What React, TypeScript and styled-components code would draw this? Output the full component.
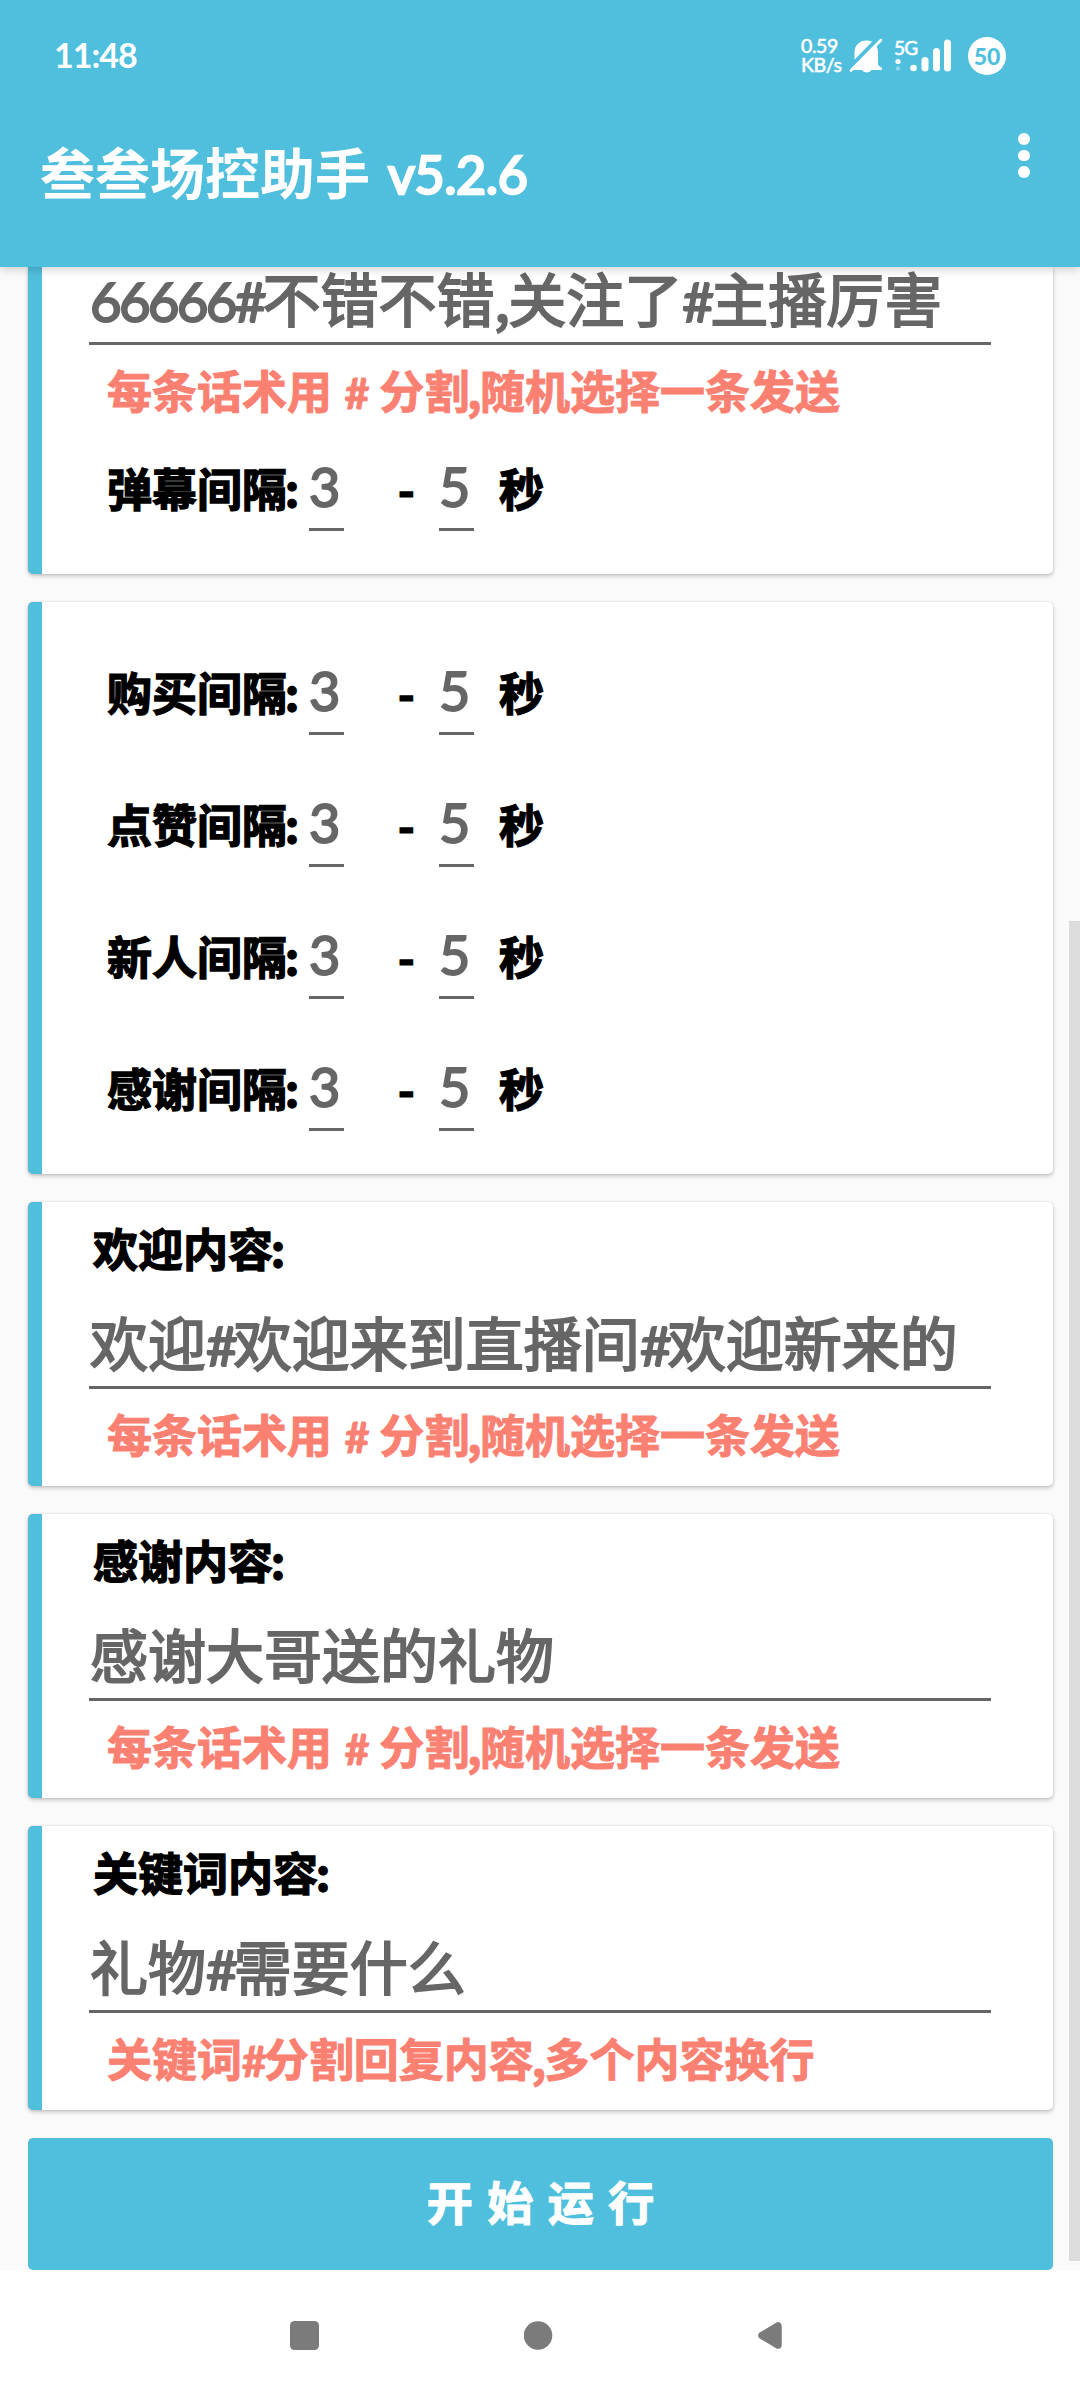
import React from "react";
import styled, { createGlobalStyle } from "styled-components";

const BLUE = "#50bfde";
const GREY = "#666666";
const CJK = '"Noto Sans CJK SC", "Noto Sans", sans-serif';
const LATIN = 'Lato, "Noto Sans CJK SC", sans-serif';

const GlobalStyle = createGlobalStyle`
  html, body { margin: 0; padding: 0; background: #fafafa; }
  *, *::before, *::after { box-sizing: border-box; }
`;

const Screen = styled.div`
  width: 1080px;
  height: 2400px;
  display: flex;
  flex-direction: column;
  overflow: hidden;
  background: #fafafa;
  font-family: ${CJK};
`;

const Header = styled.header`
  position: relative;
  z-index: 1;
  flex: none;
  height: 267px;
  background: ${BLUE};
  color: #fff;
  box-shadow: 0 2px 9px rgba(0, 0, 0, 0.2);
`;

const StatusBar = styled.div`
  height: 112px;
  padding: 0 74px 0 54px;
  display: flex;
  align-items: center;
  justify-content: space-between;
`;

const Clock = styled.div`
  font: 700 34px/40px ${LATIN};
  letter-spacing: -1px;
  padding-bottom: 3px;
`;

const StatusIcons = styled.div`
  display: flex;
  align-items: center;
`;

const NetSpeed = styled.div`
  width: 48px;
  display: flex;
  flex-direction: column;
  padding-bottom: 2px;
  font: 400 19.5px/19px ${LATIN};
  letter-spacing: -0.4px;
  -webkit-text-stroke: 0.6px;
`;

const Network = styled.div`
  display: flex;
  flex-direction: column;
  width: 16px;
  height: 36px;
  margin-left: 10px;
  font: 400 19px/20px ${LATIN};
  letter-spacing: -0.8px;
  white-space: nowrap;
  -webkit-text-stroke: 0.6px;
`;

const Battery = styled.div`
  width: 38px;
  height: 38px;
  margin-left: 17px;
  border-radius: 50%;
  background: #fff;
  color: ${BLUE};
  display: flex;
  align-items: center;
  justify-content: center;
  font: 900 23px/38px ${LATIN};
`;

const Toolbar = styled.div`
  height: 155px;
  padding: 0 50px 0 40px;
  display: flex;
  align-items: flex-start;
  justify-content: space-between;
`;

const Title = styled.h1`
  margin: 0;
  padding-top: 18px;
  font-size: 55px;
  line-height: 80px;
  font-weight: 700;
`;

const Version = styled.span`
  padding-left: 18px;
  font: 400 52px/0 ${LATIN};
  letter-spacing: -0.4px;
  -webkit-text-stroke: 2.6px;
`;

const MenuButton = styled.button`
  margin: 21px 0 0;
  padding: 0;
  border: 0;
  background: none;
  display: flex;
  flex-direction: column;
  gap: 5px;
`;

const Dot = styled.span`
  width: 11.6px;
  height: 11.6px;
  border-radius: 50%;
  background: #fff;
`;

const Body = styled.main`
  flex: 1;
  display: flex;
`;

const List = styled.div`
  flex: 1;
  padding: 0 16px 0 28px;
  display: flex;
  flex-direction: column;
  gap: 28px;
`;

const ScrollTrack = styled.div`
  width: 11px;
  padding: 654px 0 9px;
  display: flex;
`;

const ScrollThumb = styled.div`
  flex: 1;
  background: #dcdcdc;
`;

const Card = styled.section<{ $scrolled?: boolean }>`
  flex: none;
  border-left: 14px solid ${BLUE};
  border-radius: ${(p) => (p.$scrolled ? "0 0 5px 5px" : "5px")};
  background: #fff;
  padding: ${(p) => (p.$scrolled ? 0 : 22)}px 62px 22px 47px;
  box-shadow: 0 2px 4px rgba(0, 0, 0, 0.22), 0 0 2px rgba(0, 0, 0, 0.12);
`;

const Heading = styled.div`
  height: 50px;
  padding: 1px 0 0 4px;
  font-size: 45px;
  line-height: 46px;
  font-weight: 700;
  color: #000;
  white-space: nowrap;
  -webkit-text-stroke: 1.4px;
`;

const Punct = styled.span`
  margin-left: -0.05em;
  letter-spacing: -0.035em;
`;

const Entry = styled.div<{ $scrolled?: boolean }>`
  height: ${(p) => (p.$scrolled ? 78 : 115)}px;
  padding: ${(p) => (p.$scrolled ? 0 : 37)}px 0 0 1px;
  border-bottom: 3px solid ${GREY};
  font-size: 58px;
  line-height: 60px;
  font-weight: 400;
  color: ${GREY};
  white-space: nowrap;
  -webkit-text-stroke: 1.9px;

  ${Punct} {
    margin-left: -0.01em;
    letter-spacing: -0.03em;
  }
`;

const Hint = styled.div`
  height: 75px;
  padding: 15px 0 0 18px;
  font-size: 45px;
  line-height: 60px;
  font-weight: 700;
  color: #fa8072;
  white-space: nowrap;
  word-spacing: 2.6px;
  -webkit-text-stroke: 1px;
`;

const IntervalRow = styled.div`
  height: 132px;
  padding-left: 18px;
  display: grid;
  grid-template-columns: 202px 35px 95px 35px 1fr;
  font-size: 45px;
  line-height: 136px;
  font-weight: 700;
  color: #000;
  white-space: nowrap;
  -webkit-text-stroke: 1.4px;
`;

const NumberField = styled.span`
  height: 111px;
  border-bottom: 3px solid ${GREY};
  color: ${GREY};
  font: 400 54px/133px ${LATIN};
  letter-spacing: -1px;
  -webkit-text-stroke: 1.9px;
`;

const Dash = styled.span`
  padding-left: 54px;
`;

const Unit = styled.span`
  padding-left: 25px;
`;

const Latin = styled.span<{ $tight: number }>`
  font-family: ${LATIN};
  font-size: 0.945em;
  line-height: 0;
  letter-spacing: ${(p) => p.$tight}em;
`;

const StartButton = styled.button`
  flex: none;
  height: 132px;
  border: 0;
  padding: 0 0 8px;
  border-radius: 5px;
  background: ${BLUE};
  color: #fff;
  font: 700 46px/124px ${CJK};
  word-spacing: 4px;
  -webkit-text-stroke: 1.2px;
`;

const NavBar = styled.nav`
  flex: none;
  height: 130px;
  background: #fff;
  padding: 1px 298px 0 290px;
  display: flex;
  align-items: center;
  justify-content: space-between;
`;

/** Sets digits and hash marks in the Latin face and tightens punctuation. */
function Mixed({ text }: { text: string }) {
  return (
    <>
      {text.split(/([0-9]+|#|[,:])/).map((part, i) => {
        if (i % 2 === 0) return part;
        if (part === "," || part === ":") return <Punct key={i}>{part}</Punct>;
        return (
          <Latin key={i} $tight={part === "#" ? -0.072 : -0.052}>
            {part}
          </Latin>
        );
      })}
    </>
  );
}

function Interval({ label }: { label: string }) {
  return (
    <IntervalRow>
      <span>
        <Mixed text={label} />
      </span>
      <NumberField>3</NumberField>
      <Dash>-</Dash>
      <NumberField>5</NumberField>
      <Unit>秒</Unit>
    </IntervalRow>
  );
}

const MutedBell = () => (
  <svg width="35" height="36" viewBox="0 0 35 36">
    <path
      d="M17.5 2.5c-7 0-12 4.800-12 12V27L1.500 30v2h11.500a5 3.600 0 0 0 9.500 0H33v-2l-4-3V14.500c0-7.200-4.500-12-11.500-12z"
      fill="#fff"
    />
    <path d="M-1 31 30-0.500" stroke={BLUE} strokeWidth="4" />
    <path d="M2 32.500 32 2" stroke="#fff" strokeWidth="2.600" strokeLinecap="round" />
  </svg>
);

const SignalBars = () => (
  <svg width="41" height="36" viewBox="0 0 41 36">
    <circle cx="3.500" cy="30" r="3.300" fill="#fff" />
    <rect x="11.500" y="19" width="7" height="14.500" rx="3.500" fill="#fff" />
    <rect x="23" y="10" width="7" height="23.500" rx="3.500" fill="#fff" />
    <rect x="34" y="1.500" width="7" height="32" rx="3.500" fill="#fff" />
  </svg>
);

const ActivityDots = () => (
  <svg width="10" height="14" viewBox="0 0 10 14">
    <circle cx="4" cy="3.500" r="2.600" fill="#fff" />
    <circle cx="4" cy="10.500" r="2.200" fill="#fff" opacity="0.35" />
  </svg>
);

const RANDOM_HINT = "每条话术用 # 分割,随机选择一条发送";

const intervals = ["购买间隔:", "点赞间隔:", "新人间隔:", "感谢间隔:"];

const replies = [
  { title: "欢迎内容:", value: "欢迎#欢迎来到直播间#欢迎新来的", hint: RANDOM_HINT },
  { title: "感谢内容:", value: "感谢大哥送的礼物", hint: RANDOM_HINT },
  { title: "关键词内容:", value: "礼物#需要什么", hint: "关键词#分割回复内容,多个内容换行" },
];

export default function App() {
  return (
    <Screen>
      <GlobalStyle />
      <Header>
        <StatusBar>
          <Clock>11:48</Clock>
          <StatusIcons>
            <NetSpeed>
              <span>0.59</span>
              <span>KB/s</span>
            </NetSpeed>
            <MutedBell />
            <Network>
              <span>5G</span>
              <ActivityDots />
            </Network>
            <SignalBars />
            <Battery>50</Battery>
          </StatusIcons>
        </StatusBar>
        <Toolbar>
          <Title>
            叁叁场控助手<Version>v5.2.6</Version>
          </Title>
          <MenuButton aria-label="菜单">
            <Dot />
            <Dot />
            <Dot />
          </MenuButton>
        </Toolbar>
      </Header>
      <Body>
        <List>
          <Card $scrolled>
            <Entry $scrolled>
              <Mixed text="66666#不错不错,关注了#主播厉害" />
            </Entry>
            <Hint>
              <Mixed text={RANDOM_HINT} />
            </Hint>
            <Interval label="弹幕间隔:" />
          </Card>
          <Card>
            {intervals.map((label) => (
              <Interval key={label} label={label} />
            ))}
          </Card>
          {replies.map((r) => (
            <Card key={r.title}>
              <Heading>
                <Mixed text={r.title} />
              </Heading>
              <Entry>
                <Mixed text={r.value} />
              </Entry>
              <Hint>
                <Mixed text={r.hint} />
              </Hint>
            </Card>
          ))}
          <StartButton>开 始 运 行</StartButton>
        </List>
        <ScrollTrack>
          <ScrollThumb />
        </ScrollTrack>
      </Body>
      <NavBar>
        <svg width="29" height="29" viewBox="0 0 29 29">
          <rect width="29" height="29" rx="4.500" fill="#7b7b7b" />
        </svg>
        <svg width="29" height="29" viewBox="0 0 29 29">
          <circle cx="14" cy="14.500" r="14.300" fill="#7b7b7b" />
        </svg>
        <svg width="24" height="27" viewBox="0 0 24 27">
          <path
            d="M4 13.500 20 4v19z"
            fill="#7b7b7b"
            stroke="#7b7b7b"
            strokeWidth="7.500"
            strokeLinejoin="round"
          />
        </svg>
      </NavBar>
    </Screen>
  );
}
